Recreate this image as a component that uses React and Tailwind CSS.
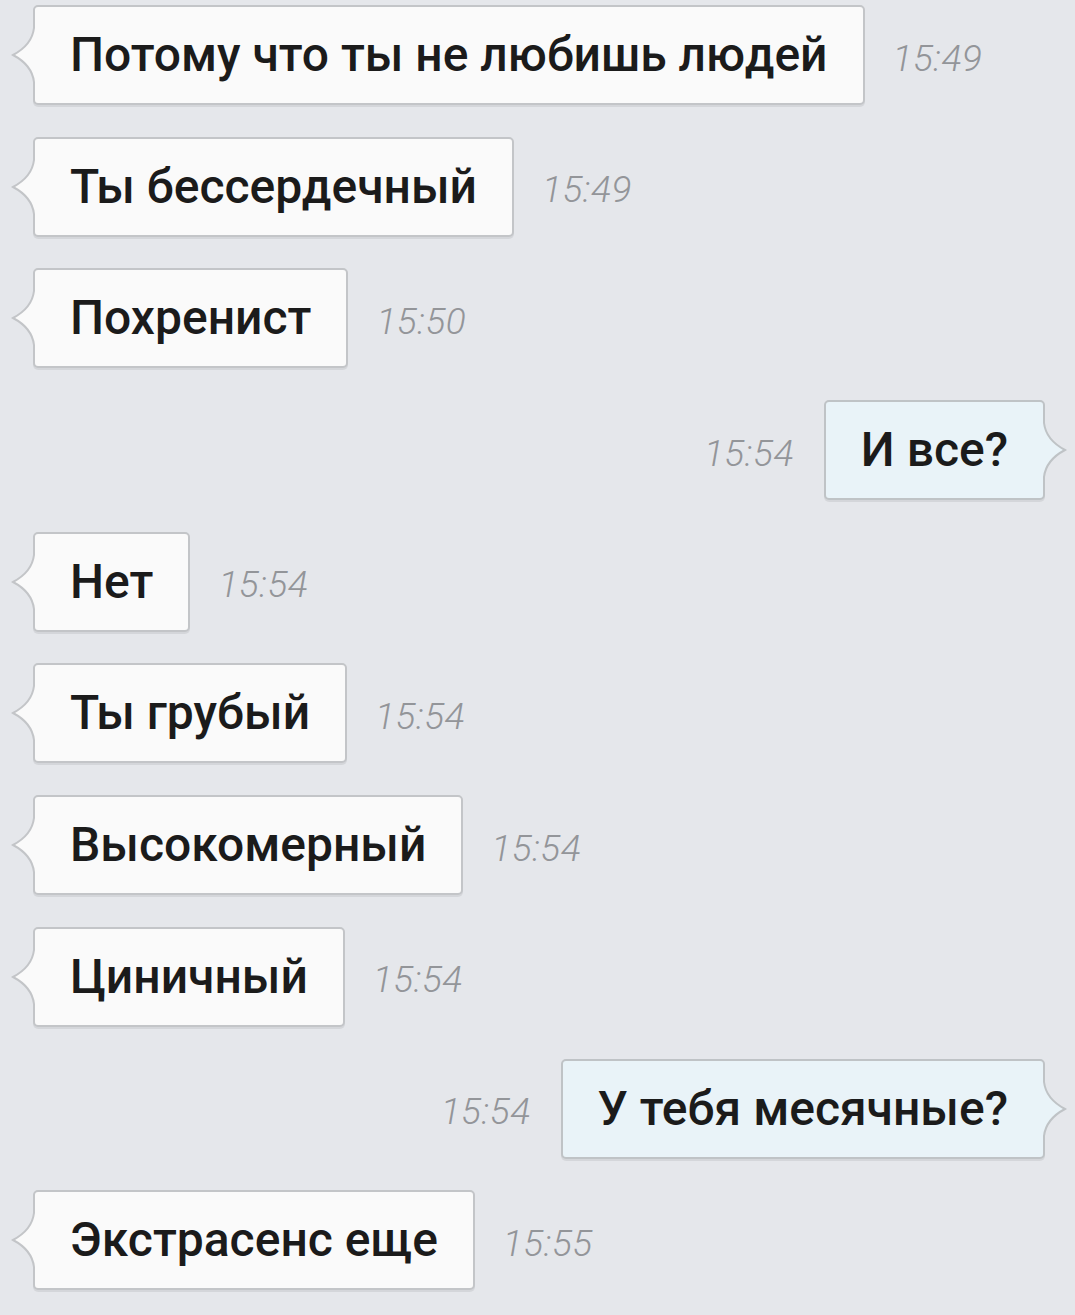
import React from "react";

const messages = [
  { text: "Потому что ты не любишь людей", time: "15:49", out: false },
  { text: "Ты бессердечный", time: "15:49", out: false },
  { text: "Похренист", time: "15:50", out: false },
  { text: "И все?", time: "15:54", out: true },
  { text: "Нет", time: "15:54", out: false },
  { text: "Ты грубый", time: "15:54", out: false },
  { text: "Высокомерный", time: "15:54", out: false },
  { text: "Циничный", time: "15:54", out: false },
  { text: "У тебя месячные?", time: "15:54", out: true },
  { text: "Экстрасенс еще", time: "15:55", out: false },
];

function LeftTail() {
  return (
    <svg
      className="absolute top-1/2 -translate-y-1/2 left-[-24px]"
      width="26"
      height="54"
      viewBox="0 0 26 54"
    >
      <path d="M23 0 Q21 17 2 27 Q21 37 23 54 L26 54 L26 0 Z" fill="#fafafa" />
      <path d="M23 0 Q21 17 2 27 Q21 37 23 54" fill="none" stroke="#c3c5c8" strokeWidth="2" />
    </svg>
  );
}

function RightTail() {
  return (
    <svg
      className="absolute top-1/2 -translate-y-1/2 right-[-24px]"
      width="26"
      height="54"
      viewBox="0 0 26 54"
    >
      <path d="M3 0 Q5 17 24 27 Q5 37 3 54 L0 54 L0 0 Z" fill="#e9f3f8" />
      <path d="M3 0 Q5 17 24 27 Q5 37 3 54" fill="none" stroke="#bfc3c6" strokeWidth="2" />
    </svg>
  );
}

function Time({ t }) {
  return (
    <span className="block translate-y-[3px] text-[37px] italic font-light text-[#939599] tracking-[0.5px] leading-none font-['Roboto',sans-serif]">
      {t}
    </span>
  );
}

function Row({ m }) {
  if (m.out) {
    return (
      <div className="flex items-center justify-end pr-[30px]">
        <div className="mr-[30px]">
          <Time t={m.time} />
        </div>
        <div className="relative h-[100px] flex items-center px-[35px] bg-[#e9f3f8] border-2 border-[#bfc3c6] rounded-[5px] shadow-[0_2px_0_rgba(0,0,0,0.07)]">
          <span className="text-[48px] font-medium text-[#1b1b1b] leading-none font-['Roboto',sans-serif]">{m.text}</span>
          <RightTail />
        </div>
      </div>
    );
  }
  return (
    <div className="flex items-center justify-start pl-[33px]">
      <div className="relative h-[100px] flex items-center px-[35px] bg-[#fafafa] border-2 border-[#c3c5c8] rounded-[5px] shadow-[0_2px_0_rgba(0,0,0,0.07)]">
        <span className="text-[48px] font-medium text-[#1b1b1b] leading-none font-['Roboto',sans-serif]">{m.text}</span>
        <LeftTail />
      </div>
      <div className="ml-[28px]">
        <Time t={m.time} />
      </div>
    </div>
  );
}

export default function App() {
  return (
    <div className="w-[1075px] min-h-[1315px] bg-[#e5e7eb] pt-[5px] flex flex-col gap-[31.7px] font-['Roboto',sans-serif]">
      {messages.map((m, i) => (
        <Row key={i} m={m} />
      ))}
    </div>
  );
}
